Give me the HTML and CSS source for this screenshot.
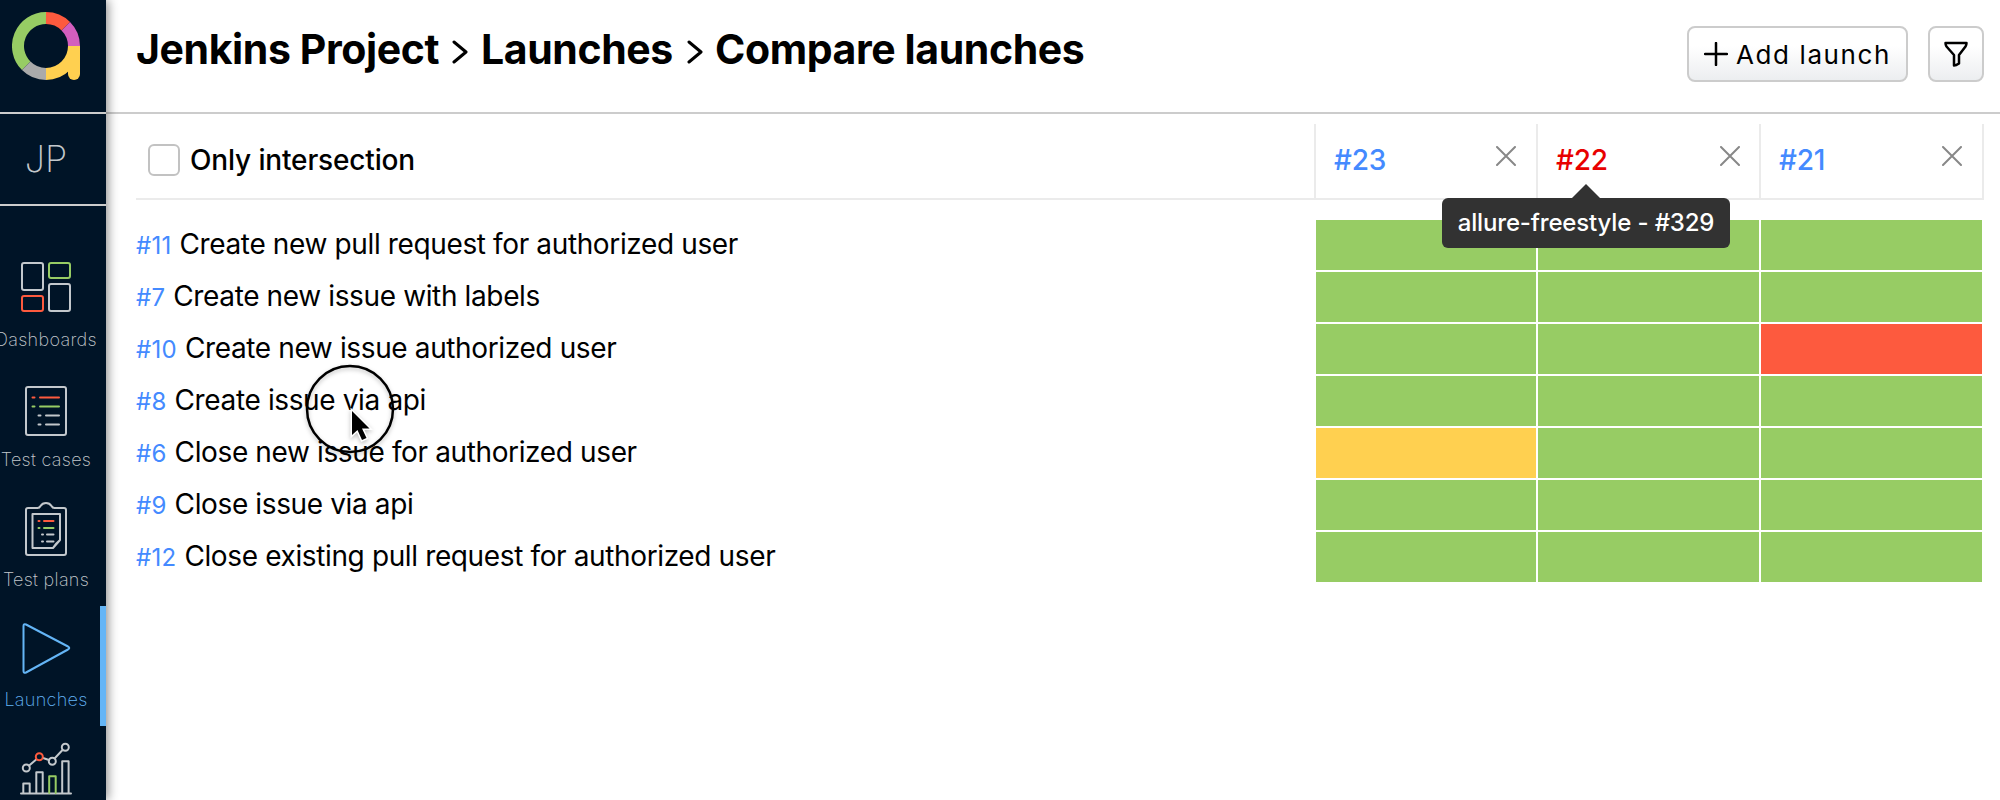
FILE: index.html
```html
<!DOCTYPE html>
<html lang="en">
<head>
  <meta charset="UTF-8">
  <meta name="viewport" content="width=device-width, initial-scale=1.0">
  <title>Compare launches</title>
  <link rel="stylesheet" href="styles.css">
</head>
<body>
  <div class="app">
    <aside class="sidebar">
      <div class="logo">
        <svg width="68" height="68" viewBox="0 0 68 68" fill="none" stroke-width="12">
          <path stroke="#97cc64" d="M14.2 53.8A28 28 0 0 1 34 6"/>
          <path stroke="#fd5a3e" d="M34 6A28 28 0 0 1 53.8 14.2"/>
          <path stroke="#d35ebe" d="M53.8 14.2A28 28 0 0 1 62 34"/>
          <path stroke="#aaa" d="M34 62A28 28 0 0 1 14.2 53.8"/>
          <path stroke="#ffd050" d="M62 34A28 28 0 0 1 34 62"/>
          <path fill="#ffd050" d="M56 34h12v28a6 6 0 0 1-12 0z"/>
        </svg>
      </div>
      <div class="project">JP</div>
      <nav class="menu">
        <a class="menu-item">
          <svg class="menu-icon" viewBox="0 0 60 60">
            <rect x="6" y="6" width="21" height="27" rx="2"/>
            <rect class="green" x="33" y="6" width="21" height="15" rx="2"/>
            <rect class="red" x="6" y="39" width="21" height="15" rx="2"/>
            <rect x="33" y="27" width="21" height="27" rx="2"/>
          </svg>
          <span>Dashboards</span>
        </a>
        <a class="menu-item">
          <svg class="menu-icon" viewBox="0 0 60 60">
            <rect x="10" y="10" width="40" height="48" rx="2"/>
            <path class="red" d="M16.5 20.5h2M24 20.5h19"/>
            <path class="green" d="M16.5 29.5h2M24 29.5h19"/>
            <path d="M22.5 38.5h2M30 38.5h13M22.5 47.5h2M30 47.5h13"/>
          </svg>
          <span>Test cases</span>
        </a>
        <a class="menu-item">
          <svg class="menu-icon" viewBox="0 0 60 60">
            <path d="M12 11h9.500q2 0 3-2c2.500-4 8.500-4 11 0q1 2 3 2H48q2 0 2 2v43q0 2-2 2H12q-2 0-2-2V13q0-2 2-2z"/>
            <path d="M16.500 17H44v26l-7 8H16.500zM44 43q-5 4-7 8"/>
            <path class="red" d="M22.500 24h1M28 24h9.500"/>
            <path class="green" d="M22.500 31h1M28 31h9.500"/>
            <path d="M26 37.500h1M31 37.500h6.500M26 44.500h1M31 44.500h6.500"/>
          </svg>
          <span>Test plans</span>
        </a>
        <a class="menu-item active">
          <svg class="menu-icon" viewBox="0 0 60 60">
            <path d="M7.500 9q0-2.500 2.500-1.500l42 22q2.500 1.500 0 3L10 55.500q-2.500 1-2.500-1.500z"/>
          </svg>
          <span>Launches</span>
        </a>
        <a class="menu-item">
          <svg class="menu-icon" viewBox="0 0 60 60">
            <path d="M5 56.500h50M7.300 56V46.500h6.400V56M20.300 56V35.300h6.400V56M46.200 56V24.300h6.400V56"/>
            <path class="green" d="M33.200 56V39.300h6.500V56"/>
            <path d="M13.200 28.500l7-6M27 21l6 2M39 21l7.500-8"/>
            <circle cx="10.300" cy="31" r="3.500"/>
            <circle class="red" cx="23.300" cy="19.700" r="3.500"/>
            <circle cx="36.300" cy="24.300" r="3.500"/>
            <circle cx="49.300" cy="10.300" r="3.500"/>
          </svg>
        </a>
      </nav>
    </aside>

    <main class="content">
      <header class="header">
        <h1 class="breadcrumbs">
          <span class="crumb-project">Jenkins Project</span>
          <svg class="chevron" viewBox="0 0 16 24"><path d="M2 2l12 10L2 22"/></svg>
          <span class="crumb-section">Launches</span>
          <svg class="chevron" viewBox="0 0 16 24"><path d="M2 2l12 10L2 22"/></svg>
          <span class="crumb-page">Compare launches</span>
        </h1>
        <div class="actions">
          <button class="btn btn-add">
            <svg width="24" height="24" viewBox="0 0 24 24"><path d="M12 1v22M1 12h22"/></svg>
            <span>Add launch</span>
          </button>
          <button class="btn btn-filter" aria-label="Filter">
            <svg width="24" height="26" viewBox="0 0 24 26"><path d="M1.500 2h21q0 2-1 3.500L15 14v8.500q-3 2-5 2V14L2.500 5.500Q1.500 4 1.500 2z"/></svg>
          </button>
        </div>
      </header>

      <section class="compare">
        <div class="compare-head">
          <label class="only">
            <input type="checkbox" class="checkbox">
            <span>Only intersection</span>
          </label>
          <div class="launch">
            <a>#23</a>
            <svg class="close" viewBox="0 0 20 20"><path d="M1 1l18 18M19 1L1 19"/></svg>
          </div>
          <div class="launch hovered">
            <a>#22</a>
            <svg class="close" viewBox="0 0 20 20"><path d="M1 1l18 18M19 1L1 19"/></svg>
            <div class="tooltip">allure-freestyle - #329</div>
          </div>
          <div class="launch">
            <a>#21</a>
            <svg class="close" viewBox="0 0 20 20"><path d="M1 1l18 18M19 1L1 19"/></svg>
          </div>
        </div>

        <div class="compare-body">
          <div class="row">
            <div class="name"><a>#11</a> <span>Create new pull request for authorized user</span></div>
            <i class="cell passed"></i><i class="cell passed"></i><i class="cell passed"></i>
          </div>
          <div class="row">
            <div class="name"><a>#7</a> <span>Create new issue with labels</span></div>
            <i class="cell passed"></i><i class="cell passed"></i><i class="cell passed"></i>
          </div>
          <div class="row">
            <div class="name"><a>#10</a> <span>Create new issue authorized user</span></div>
            <i class="cell passed"></i><i class="cell passed"></i><i class="cell failed"></i>
          </div>
          <div class="row">
            <div class="name"><a>#8</a> <span>Create issue via api</span></div>
            <i class="cell passed"></i><i class="cell passed"></i><i class="cell passed"></i>
          </div>
          <div class="row">
            <div class="name"><a>#6</a> <span>Close new issue for authorized user</span></div>
            <i class="cell broken"></i><i class="cell passed"></i><i class="cell passed"></i>
          </div>
          <div class="row">
            <div class="name"><a>#9</a> <span>Close issue via api</span></div>
            <i class="cell passed"></i><i class="cell passed"></i><i class="cell passed"></i>
          </div>
          <div class="row">
            <div class="name"><a>#12</a> <span>Close existing pull request for authorized user</span></div>
            <i class="cell passed"></i><i class="cell passed"></i><i class="cell passed"></i>
          </div>
        </div>
      </section>
    </main>
  </div>

  <svg class="pointer" width="90" height="90" viewBox="0 0 90 90">
    <circle cx="45" cy="45" r="43" fill="none" stroke="#000" stroke-width="2.500"/>
    <path d="M47 47v24l5.500-5 4.500 10 4.500-2-4.500-9.500h7.500z" stroke="#fff" stroke-width="3" paint-order="stroke"/>
  </svg>
</body>
</html>
```
FILE: styles.css
```css
* {
  box-sizing: border-box;
}
body {
  margin: 0;
  font-family: Inter, 'Liberation Sans', sans-serif;
  font-size: 28px;
  color: #000;
  background: #fff;
  overflow: hidden;
}
.app {
  display: flex;
  height: 800px;
  overflow: hidden;
}

/* sidebar */
.sidebar {
  flex: 0 0 120px;
  width: 120px;
  margin-left: -14px;
  background: #001427;
  color: #c3c8cc;
  box-shadow: 2px 0 10px rgba(0, 0, 0, 0.45);
  z-index: 1;
}
.logo {
  height: 114px;
  padding-top: 12px;
  text-align: center;
  border-bottom: 2px solid #ccc;
}
.logo svg {
  display: block;
  margin: 0 auto;
}
.project {
  height: 92px;
  line-height: 90px;
  text-align: center;
  font-size: 36px;
  font-weight: 200;
  border-bottom: 2px solid #ccc;
}
.menu {
  padding-top: 40px;
}
.menu-item {
  display: flex;
  flex-direction: column;
  align-items: center;
  height: 120px;
  padding-top: 11px;
  font-size: 18px;
  font-weight: 200;
  line-height: 22px;
  letter-spacing: 0.3px;
  white-space: nowrap;
}
.menu-item span {
  margin-top: 12px;
}
.menu-icon {
  width: 60px;
  height: 60px;
  flex: none;
  fill: none;
  stroke: #c3c8cc;
  stroke-width: 2;
  stroke-linecap: round;
  stroke-linejoin: round;
}
.menu-icon .red {
  stroke: #fd5a3e;
}
.menu-icon .green {
  stroke: #97cc64;
}
.menu-item.active {
  color: #64b5f6;
  border-right: 6px solid #64b5f6;
  padding-left: 6px;
}
.menu-item.active .menu-icon {
  stroke: #64b5f6;
}

/* header */
.content {
  flex: 1;
  min-width: 0;
}
.header {
  display: flex;
  justify-content: space-between;
  height: 114px;
  padding: 26px 16px 0 30px;
  border-bottom: 2px solid #ccc;
}
.breadcrumbs {
  display: flex;
  margin: 0;
  font-size: 41px;
  font-weight: 700;
  line-height: 46px;
  letter-spacing: -0.4px;
  white-space: nowrap;
}
.crumb-project {
  width: 316px;
}
.crumb-section {
  width: 206px;
  margin-left: 13px;
}
.crumb-page {
  margin-left: 12px;
}
.chevron {
  width: 16px;
  height: 24px;
  margin-top: 14px;
  fill: none;
  stroke: #000;
  stroke-width: 3;
  stroke-linecap: round;
  stroke-linejoin: round;
}
.actions {
  display: flex;
  gap: 20px;
}
.btn {
  display: flex;
  align-items: center;
  height: 56px;
  padding: 0;
  border: 2px solid #ccc;
  border-radius: 8px;
  background: linear-gradient(#fff 35%, #eceef0);
  font: 400 26px Inter, sans-serif;
  letter-spacing: 1.6px;
  color: #000;
  white-space: nowrap;
}
.btn svg {
  fill: none;
  stroke: #000;
  stroke-width: 2.5;
  stroke-linecap: round;
  stroke-linejoin: round;
}
.btn-add {
  width: 221px;
  padding-left: 15px;
  gap: 8px;
}
.btn-filter {
  width: 56px;
  justify-content: center;
}

/* comparison table */
.compare {
  padding: 10px 16px 0 30px;
}
.compare-head,
.row {
  display: grid;
  grid-template-columns: 1178px 222px 223px 225px;
}
.compare-head {
  height: 76px;
  border-bottom: 2px solid #ebebeb;
  font-weight: 500;
  letter-spacing: -0.15px;
}
.only {
  display: flex;
  align-items: center;
  padding: 0 0 2px 12px;
}
.checkbox {
  appearance: none;
  width: 32px;
  height: 32px;
  margin: 0 10px 0 0;
  border: 2px solid #c2c2c2;
  border-radius: 6px;
}
.launch {
  position: relative;
  display: flex;
  justify-content: space-between;
  padding: 19px 20px 0 18px;
  line-height: 34px;
  border-left: 2px solid #ebebeb;
  color: #448aff;
}
.launch:last-child {
  border-right: 2px solid #ebebeb;
}
.launch.hovered {
  padding-right: 19px;
  color: #e80000;
}
.close {
  width: 20px;
  height: 20px;
  margin-top: 3px;
  fill: none;
  stroke: #888;
  stroke-width: 2;
  stroke-linecap: round;
}
.tooltip {
  position: absolute;
  left: -96px;
  top: 74px;
  z-index: 2;
  width: 288px;
  height: 50px;
  line-height: 50px;
  border-radius: 6px;
  background: #323232;
  color: #fff;
  font-size: 24px;
  text-align: center;
  white-space: nowrap;
}
.tooltip::before {
  content: '';
  position: absolute;
  left: 130px;
  top: -14px;
  border: 14px solid transparent;
  border-top: 0;
  border-bottom-color: #323232;
}
.compare-body {
  padding-top: 20px;
}
.row {
  height: 52px;
}
.name {
  line-height: 48px;
  white-space: nowrap;
}
.name a {
  font-size: 24px;
  letter-spacing: 0.3px;
  color: #448aff;
}
.name span {
  letter-spacing: -0.37px;
}
.cell {
  height: 50px;
  margin-left: 2px;
}
.cell:last-child {
  margin-right: 2px;
}
.passed {
  background: #97cc64;
}
.failed {
  background: #fd5a3e;
}
.broken {
  background: #ffd050;
}

/* mouse pointer with click ring */
.pointer {
  position: absolute;
  left: 305px;
  top: 364px;
  filter: drop-shadow(0 2px 2px rgba(0, 0, 0, 0.25));
}
```
